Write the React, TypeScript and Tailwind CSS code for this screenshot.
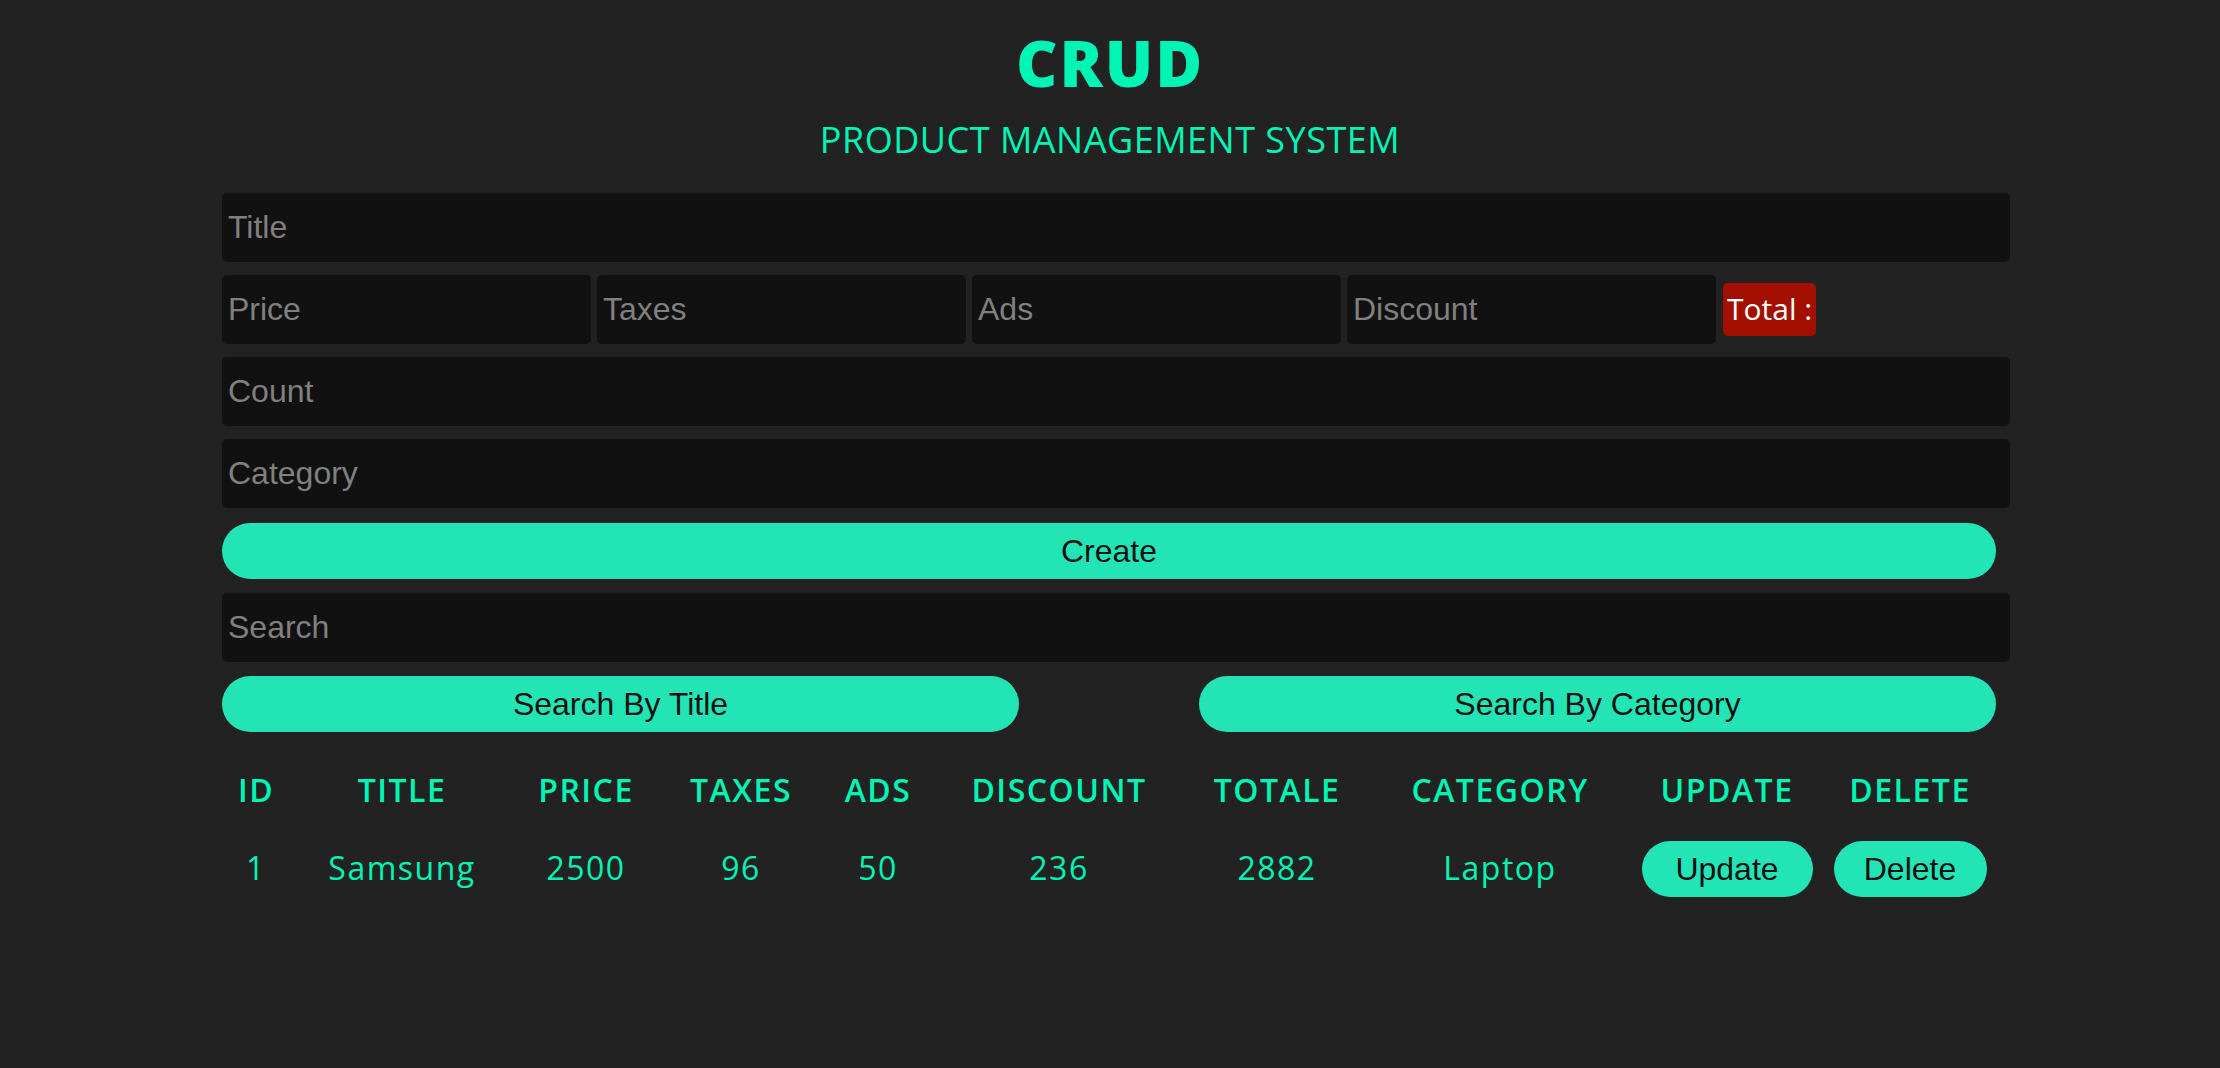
import React, { useState } from "react";

// one product row for the table
interface Product {
  id: number;
  title: string;
  price: number;
  taxes: number;
  ads: number;
  discount: number;
  total: number;
  category: string;
}

const products: Product[] = [
  {
    id: 1,
    title: "Samsung",
    price: 2500,
    taxes: 96,
    ads: 50,
    discount: 236,
    total: 2882,
    category: "Laptop",
  },
];

const poppins = "font-['Open_Sans',sans-serif]";
const arial = "font-['Liberation_Sans',Arial,sans-serif]";

const inputClass =
  "h-[69px] rounded-[5px] bg-[#111111] px-[6px] text-[32px] text-[#cfcfcf] outline-none placeholder:text-[#808080] " +
  arial;

const pillClass =
  "h-[56px] rounded-full bg-[#22e4b5] text-[32px] font-normal tracking-normal text-[#111111] " +
  arial;

const App = () => {
  const [search, setSearch] = useState("");

  return (
    <div className="min-h-screen w-full bg-[#222222]">
      <div className="mx-auto flex w-[1776px] flex-col pt-[31px]">
        <h1
          className={
            "text-center text-[64px] leading-none font-extrabold tracking-[2px] text-[#00f5b4] " +
            poppins
          }
        >
          CRUD
        </h1>
        <p
          className={
            "mt-[27px] text-center text-[36px] leading-none tracking-[0.5px] text-[#00f5b4] " +
            poppins
          }
        >
          PRODUCT MANAGEMENT SYSTEM
        </p>

        {/* inputs */}
        <div className="mt-[35px] flex w-[1788px] flex-col">
          <input className={inputClass} placeholder="Title" />
          <div className="mt-[13px] flex items-center gap-[6px]">
            <input className={inputClass + " w-[369px]"} placeholder="Price" />
            <input className={inputClass + " w-[369px]"} placeholder="Taxes" />
            <input className={inputClass + " w-[369px]"} placeholder="Ads" />
            <input className={inputClass + " w-[369px]"} placeholder="Discount" />
            <span
              className={
                "ml-[1px] flex h-[53px] items-center rounded-[5px] bg-[#a30f00] px-[4px] pb-[2px] text-[30px] font-medium text-white " +
                poppins
              }
            >
              Total :
            </span>
          </div>
          <input className={inputClass + " mt-[13px]"} placeholder="Count" />
          <input className={inputClass + " mt-[13px]"} placeholder="Category" />
        </div>

        <button className={pillClass + " mt-[15px] w-[1774px]"}>Create</button>

        <input
          className={inputClass + " mt-[14px] w-[1788px]"}
          placeholder="Search"
          value={search}
          onChange={(e) => setSearch(e.target.value)}
        />

        <div className="mt-[14px] flex w-[1774px] justify-between">
          <button className={pillClass + " w-[797px]"}>Search By Title</button>
          <button className={pillClass + " w-[797px]"}>Search By Category</button>
        </div>

        {/* table */}
        <table className="mt-[19px] w-full table-fixed text-center text-[#00f5b4]">
          <thead>
            <tr
              className={
                "h-[78px] text-[32px] font-semibold tracking-[1.5px] " + poppins
              }
            >
              <th className="w-[68px] font-semibold">ID</th>
              <th className="w-[224px] font-semibold">TITLE</th>
              <th className="w-[144px] font-semibold">PRICE</th>
              <th className="w-[166px] font-semibold">TAXES</th>
              <th className="w-[108px] font-semibold">ADS</th>
              <th className="w-[254px] font-semibold">DISCOUNT</th>
              <th className="w-[182px] font-semibold">TOTALE</th>
              <th className="w-[264px] font-semibold">CATEGORY</th>
              <th className="w-[190px] font-semibold">UPDATE</th>
              <th className="w-[176px] font-semibold">DELETE</th>
            </tr>
          </thead>
          <tbody>
            {products.map((p) => (
              <tr
                key={p.id}
                className={
                  "h-[80px] text-[32px] font-medium tracking-[1.5px] " + poppins
                }
              >
                <td className="pb-[3px]">{p.id}</td>
                <td className="pb-[3px]">{p.title}</td>
                <td className="pb-[3px]">{p.price}</td>
                <td className="pb-[3px]">{p.taxes}</td>
                <td className="pb-[3px]">{p.ads}</td>
                <td className="pb-[3px]">{p.discount}</td>
                <td className="pb-[3px]">{p.total}</td>
                <td className="pb-[3px]">{p.category}</td>
                <td>
                  <button className={pillClass + " h-[55px] w-[171px]"}>
                    Update
                  </button>
                </td>
                <td>
                  <button className={pillClass + " h-[55px] w-[153px]"}>
                    Delete
                  </button>
                </td>
              </tr>
            ))}
          </tbody>
        </table>
      </div>
    </div>
  );
};

export default App;
